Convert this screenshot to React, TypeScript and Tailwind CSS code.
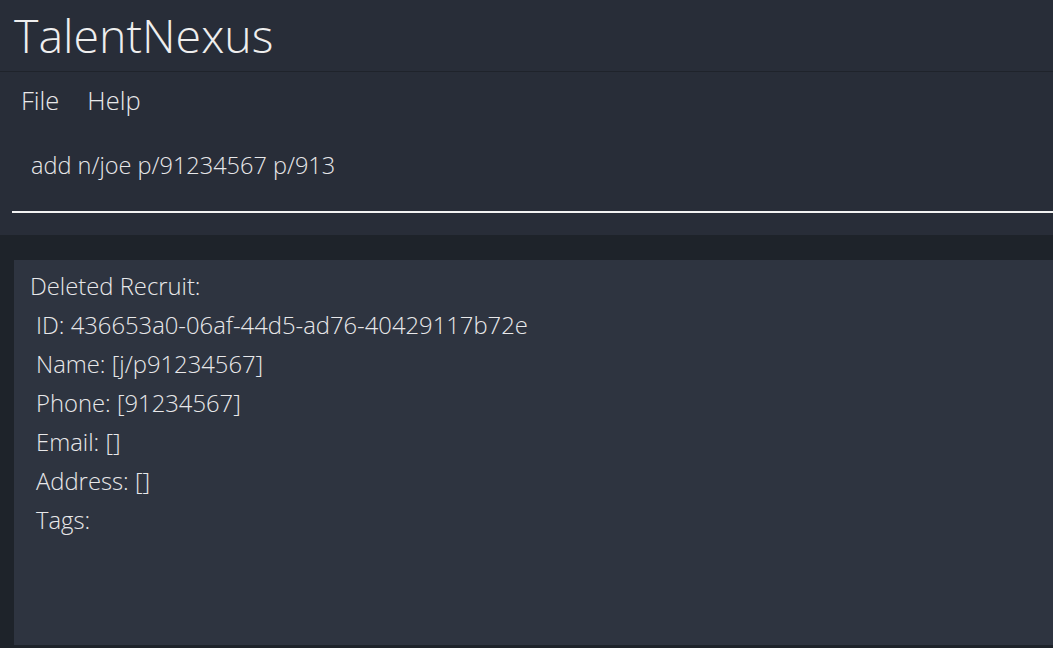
import React from "react";

export default function App() {
  const font = { fontFamily: '"Open Sans", "Noto Sans", sans-serif' };
  const lines = [
    "ID: 436653a0-06af-44d5-ad76-40429117b72e",
    "Name: [j/p91234567]",
    "Phone: [91234567]",
    "Email: []",
    "Address: []",
    "Tags:",
  ];
  return (
    <div className="w-[1053px] h-[648px] overflow-hidden bg-[#1e232a] flex flex-col text-[#e8e8ea] font-light" style={font}>
      <div className="h-[72px] bg-[#282d38] flex items-center pl-[14px] border-b border-[#1f232b]">
        <span className="text-[46.5px] leading-none text-[#eeeeee]">TalentNexus</span>
      </div>
      <div className="bg-[#282d38] pt-[1px]">
        <div className="flex gap-[28px] pl-[21px] h-[54px] items-center text-[25.5px]">
          <span>File</span>
          <span>Help</span>
        </div>
        <div className="pl-[12px] pb-[22px]">
          <div className="h-[86px] border-b-2 border-[#f2f2f2] pl-[19px] pt-[25px] text-[23.5px] leading-[26px]">
            add n/joe p/91234567 p/913
          </div>
        </div>
      </div>
      <div className="h-[25px]" />
      <div className="flex-1 ml-[14px] mb-[3px] bg-[#2e3440] pt-[12px] text-[23.8px]">
        <div className="pl-[16px] h-[39px] leading-[28px]">Deleted Recruit:</div>
        {lines.map((l) => (
          <div key={l} className="pl-[22px] h-[39px] leading-[28px]">
            {l}
          </div>
        ))}
      </div>
    </div>
  );
}
